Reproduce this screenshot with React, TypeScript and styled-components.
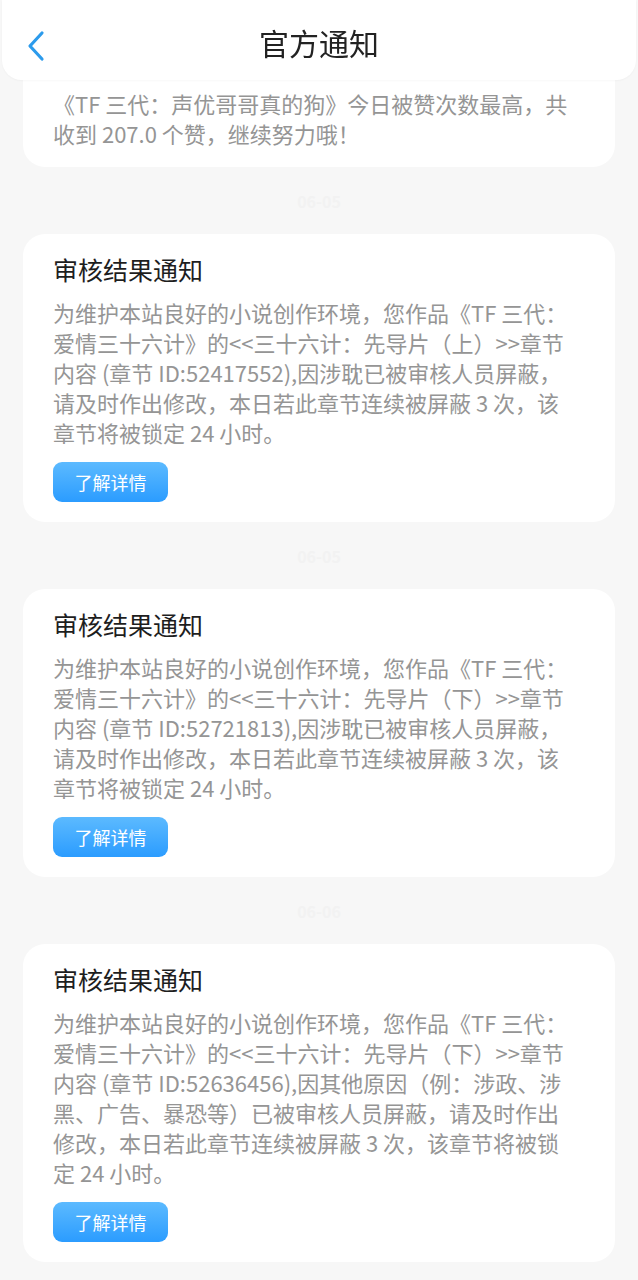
import styled, { createGlobalStyle } from "styled-components";

type Notice = {
  time?: string;
  title?: string;
  body: string;
  action?: boolean;
};

const notices: Notice[] = [
  {
    body: "《TF 三代：声优哥哥真的狗》今日被赞次数最高，共收到 207.0 个赞，继续努力哦！",
  },
  {
    time: "06-05",
    title: "审核结果通知",
    body: "为维护本站良好的小说创作环境，您作品《TF 三代：爱情三十六计》的<<三十六计：先导片（上）>>章节内容 (章节 ID:52417552),因涉耽已被审核人员屏蔽，请及时作出修改，本日若此章节连续被屏蔽 3 次，该章节将被锁定 24 小时。",
    action: true,
  },
  {
    time: "06-05",
    title: "审核结果通知",
    body: "为维护本站良好的小说创作环境，您作品《TF 三代：爱情三十六计》的<<三十六计：先导片（下）>>章节内容 (章节 ID:52721813),因涉耽已被审核人员屏蔽，请及时作出修改，本日若此章节连续被屏蔽 3 次，该章节将被锁定 24 小时。",
    action: true,
  },
  {
    time: "06-06",
    title: "审核结果通知",
    body: "为维护本站良好的小说创作环境，您作品《TF 三代：爱情三十六计》的<<三十六计：先导片（下）>>章节内容 (章节 ID:52636456),因其他原因（例：涉政、涉黑、广告、暴恐等）已被审核人员屏蔽，请及时作出修改，本日若此章节连续被屏蔽 3 次，该章节将被锁定 24 小时。",
    action: true,
  },
];

const GlobalStyle = createGlobalStyle`
  html, body {
    margin: 0;
    padding: 0;
    background: #f7f7f7;
    font-family: "Noto Sans CJK SC", "Noto Sans", sans-serif;
  }
`;

const Header = styled.header`
  position: fixed;
  top: 0;
  left: 2px;
  right: 2px;
  z-index: 2;
  height: 80px;
  display: flex;
  align-items: center;
  justify-content: center;
  background: #fff;
  border-radius: 0 0 20px 20px;
  box-shadow: 0 1px 2px rgba(0, 0, 0, 0.03);
`;

const BackButton = styled.button`
  position: absolute;
  left: 22px;
  top: 30px;
  width: 24px;
  height: 32px;
  padding: 0;
  border: 0;
  background: none;
  display: flex;
  align-items: center;
  justify-content: center;
  cursor: pointer;
`;

const HeaderTitle = styled.h1`
  margin: 4px 0 0;
  font-size: 30px;
  font-weight: 400;
  color: #222;
  line-height: 1;
`;

const List = styled.main`
  display: flex;
  flex-direction: column;
  padding: 0 23px 20px;
`;

const TimeLabel = styled.div`
  height: 67px;
  display: flex;
  align-items: center;
  justify-content: center;
  font-size: 16px;
  font-weight: 700;
  color: #f2f2f2;
`;

const Card = styled.section<{ $cut?: boolean }>`
  background: #fff;
  border-radius: 22px;
  padding: ${({ $cut }) => ($cut ? "88px 39px 19px 30px" : "17px 39px 20px 30px")};
`;

const Title = styled.h2`
  margin: 0 0 10px;
  font-size: 25px;
  font-weight: 400;
  line-height: 36px;
  color: #1e1e1e;
`;

const Body = styled.p`
  margin: 0;
  font-size: 22px;
  line-height: 30px;
  color: #959595;
`;

const DetailButton = styled.button`
  margin-top: 15px;
  width: 115px;
  height: 40px;
  border: 0;
  border-radius: 9px;
  background: linear-gradient(180deg, #5cbaff 0%, #2b9cff 100%);
  color: #fff;
  font-family: inherit;
  font-size: 18px;
  cursor: pointer;
`;

export default function App() {
  return (
    <>
      <GlobalStyle />
      <Header>
        <BackButton aria-label="返回">
          <svg width="20" height="32" viewBox="0 0 20 32">
            <polyline
              points="16,3 4,16 16,29"
              fill="none"
              stroke="#2c9bec"
              strokeWidth="3.2"
              strokeLinecap="round"
              strokeLinejoin="round"
            />
          </svg>
        </BackButton>
        <HeaderTitle>官方通知</HeaderTitle>
      </Header>
      <List>
        {notices.map((n, i) => (
          <div key={i}>
            {n.time && <TimeLabel>{n.time}</TimeLabel>}
            <Card $cut={i === 0}>
              {n.title && <Title>{n.title}</Title>}
              <Body>{n.body}</Body>
              {n.action && <DetailButton>了解详情</DetailButton>}
            </Card>
          </div>
        ))}
      </List>
    </>
  );
}
